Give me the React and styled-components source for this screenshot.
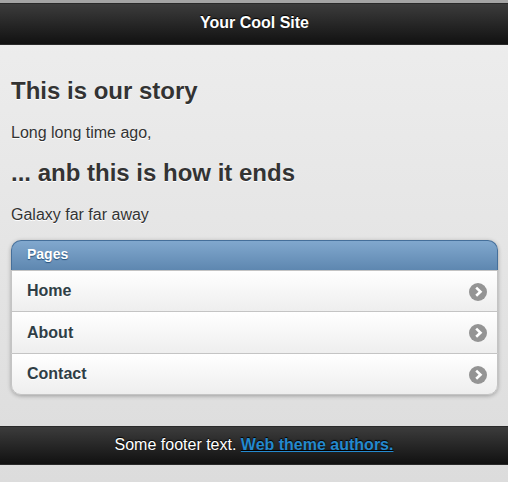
import React from "react";
import styled, { createGlobalStyle } from "styled-components";

const GlobalStyle = createGlobalStyle`
  * { box-sizing: border-box; }
  body {
    margin: 0;
    font-family: "Liberation Sans", Helvetica, Arial, sans-serif;
    font-size: 16px;
    color: #333;
    text-shadow: 0 1px 0 #fff;
  }
`;

const Page = styled.div`
  height: 482px;
  overflow: hidden;
  display: flex;
  flex-direction: column;
  border-top: 3px solid #a5a5a5;
  background: linear-gradient(#eee, #dcdcdc);
`;

const Bar = styled.div`
  flex: none;
  height: ${(p) => p.$height}px;
  border: solid #2a2a2a;
  border-width: 1px 0;
  background: linear-gradient(#3c3c3c, #111);
  color: #fff;
  text-align: center;
  text-shadow: 0 -1px 1px #000;
  line-height: 20px;
`;

const Header = styled(Bar).attrs({ as: "header" })`
  padding: 9px 0 0 1px;
`;

const Footer = styled(Bar).attrs({ as: "footer" })`
  padding-top: 8px;
`;

const Title = styled.h1`
  margin: 0;
  font-size: 16px;
  line-height: 20px;
`;

const Content = styled.main`
  flex: none;
  height: 381px;
  padding: 30px 10px 0 11px;
`;

const Heading = styled.h2`
  margin: 0;
  font-size: 24px;
  line-height: 32px;
`;

const Paragraph = styled.p`
  margin: 16px 0 14px;
  line-height: 20px;
`;

const List = styled.ul`
  list-style: none;
  margin: 15px 0 0;
  padding: 0;
  width: 487px;
  height: 155px;
  border-radius: 10px;
  box-shadow: 0 1px 4px rgba(0, 0, 0, 0.3);
`;

const Divider = styled.li`
  height: 30px;
  padding: 4px 15px;
  border: 1px solid #456f9a;
  border-bottom: 0;
  border-radius: 10px 10px 0 0;
  background: linear-gradient(#81a8ce, #5e87b0);
  color: #fff;
  font-size: 14px;
  font-weight: bold;
  line-height: 18px;
  text-shadow: 0 1px 1px #254f7a;
`;

const Item = styled.li`
  height: ${(p) => p.$height}px;
  display: flex;
  justify-content: space-between;
  align-items: flex-start;
  padding: 10px 10px 0 15px;
  border: 1px solid #c4c4c4;
  border-bottom-width: ${(p) => (p.$last ? 1 : 0)}px;
  border-radius: ${(p) => (p.$last ? "0 0 10px 10px" : 0)};
  background: linear-gradient(#fff, #eee);
  color: #2f3e46;
  font-weight: bold;
  line-height: 20px;
`;

const Label = styled.span`
  padding-top: ${(p) => p.$drop}px;
`;

const Arrow = styled.svg`
  width: 18px;
  height: 18px;
  margin-top: 2px;
`;

const Link = styled.a`
  color: #2489ce;
  font-weight: bold;
  text-decoration: underline;
  text-decoration-skip-ink: none;
`;

const pages = [
  { name: "Home", height: 41, drop: 0 },
  { name: "About", height: 42, drop: 1 },
  { name: "Contact", height: 42, drop: 0 },
];

export default function App() {
  return (
    <>
      <GlobalStyle />
      <Page>
        <Header $height={42}>
          <Title>Your Cool Site</Title>
        </Header>
        <Content>
          <Heading>This is our story</Heading>
          <Paragraph>Long long time ago,</Paragraph>
          <Heading>... anb this is how it ends</Heading>
          <Paragraph>Galaxy far far away</Paragraph>
          <List>
            <Divider>Pages</Divider>
            {pages.map((page, i) => (
              <Item key={page.name} $height={page.height} $last={i === pages.length - 1}>
                <Label $drop={page.drop}>{page.name}</Label>
                <Arrow viewBox="0 0 18 18">
                  <circle cx="9" cy="9" r="9" fill="#949494" />
                  <path d="M7.2 4.6 L11.5 8.7 L7.2 12.8" fill="none" stroke="#fff" strokeWidth="2.6" />
                </Arrow>
              </Item>
            ))}
          </List>
        </Content>
        <Footer $height={39}>
          Some footer text. <Link href="#">Web theme authors.</Link>
        </Footer>
      </Page>
    </>
  );
}
